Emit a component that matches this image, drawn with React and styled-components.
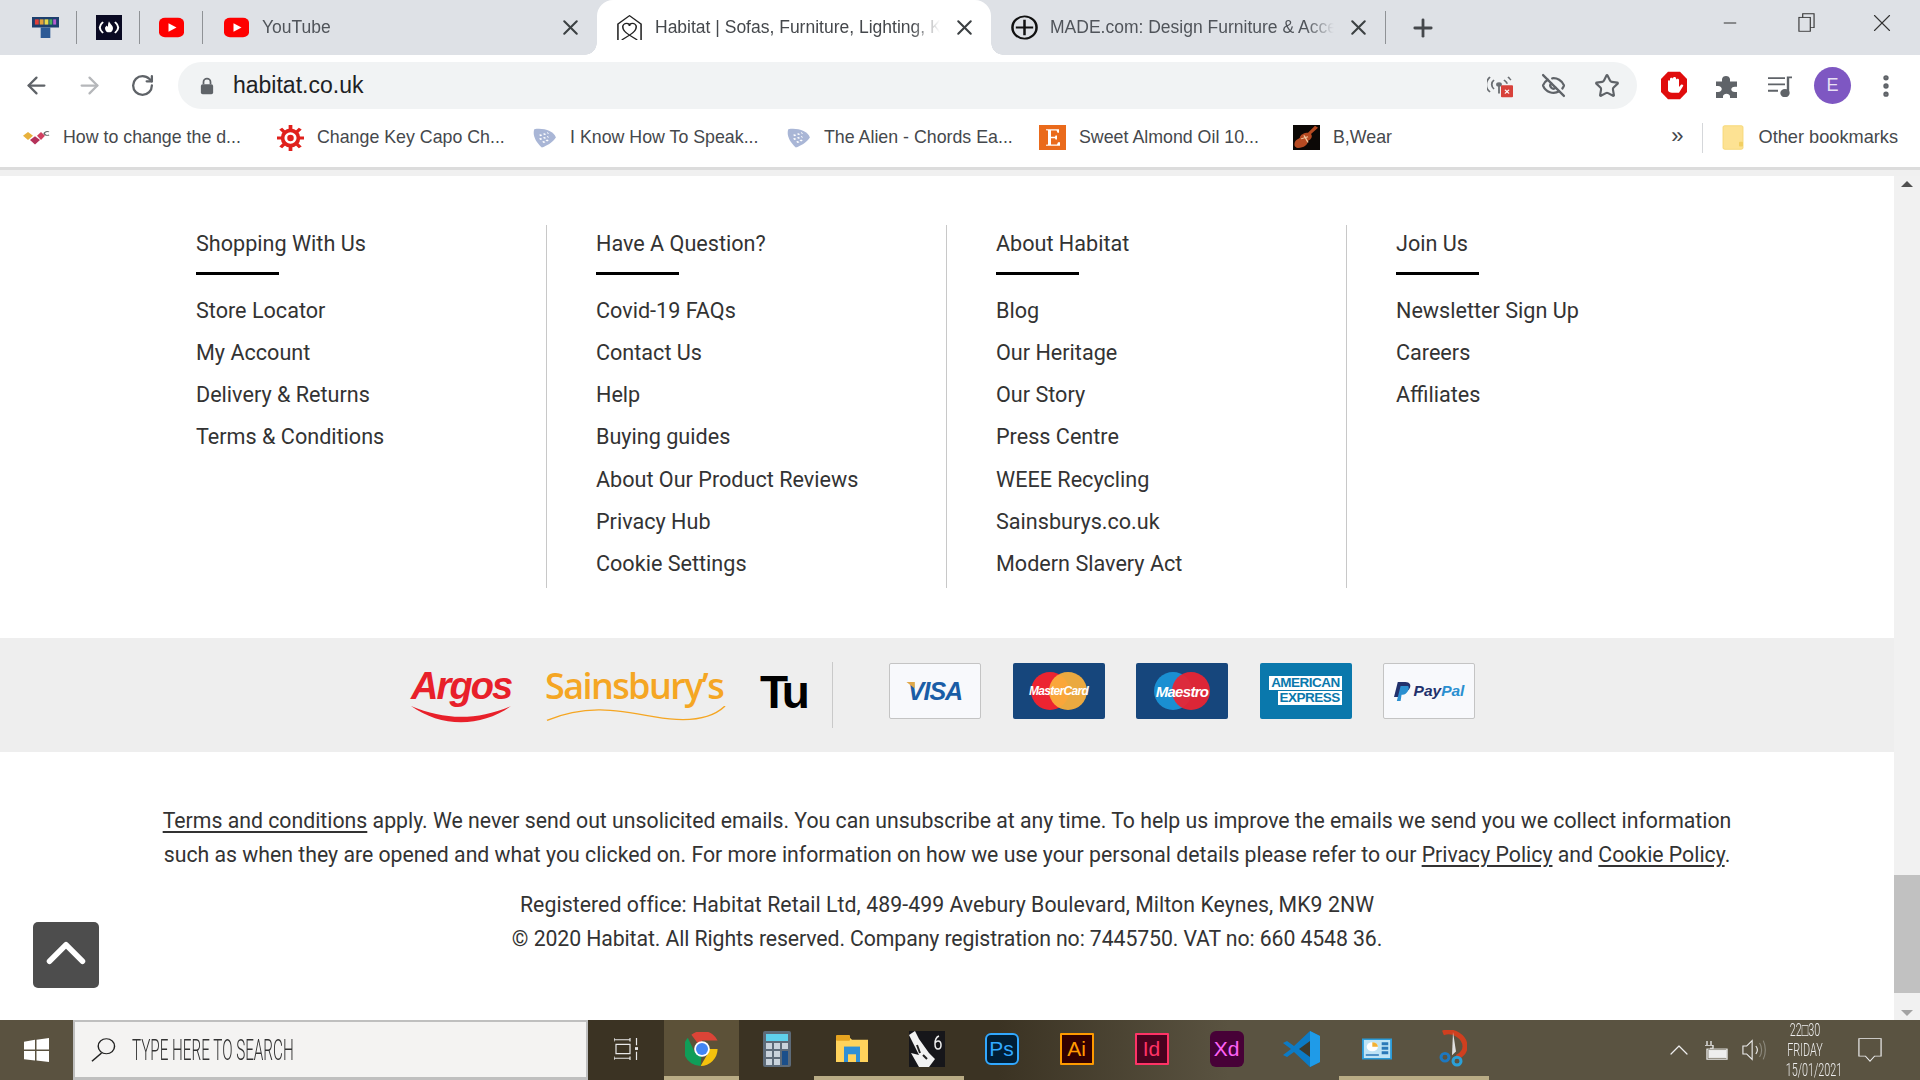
import React from 'react';
import styled, { createGlobalStyle } from 'styled-components';
import { ArrowLeft, ArrowRight, RotateCw, Star, EyeOff, Minus, X, Plus, ChevronUp, MoreVertical } from 'lucide-react';

const Global = createGlobalStyle`
  html, body { margin: 0; padding: 0; background: #fff; overflow: hidden; }
  * { box-sizing: border-box; }
`;

const Shell = styled.div`
  width: 1920px;
  height: 1080px;
  display: flex;
  flex-direction: column;
  position: relative;
  overflow: hidden;
  font-family: "Liberation Sans", Arial, sans-serif;
`;

/* ---------- tab strip ---------- */
const TabStrip = styled.div`
  height: 55px;
  flex: none;
  background: #dee1e6;
  display: flex;
  align-items: stretch;
  padding-left: 14px;
  color: #3c4043;
`;

const Pinned = styled.div`
  width: 63px;
  flex: none;
  display: flex;
  align-items: center;
  justify-content: center;
  position: relative;
  &::after {
    content: '';
    position: absolute;
    right: 0;
    top: 11px;
    bottom: 11px;
    width: 1px;
    background: #8f9296;
  }
`;

const Tab = styled.div`
  width: 394px;
  flex: none;
  display: flex;
  align-items: center;
  gap: 12px;
  padding: 0 14px 0 ${({ $active }) => ($active ? 19 : 20)}px;
  position: relative;
  background: ${({ $active }) => ($active ? '#fff' : 'transparent')};
  border-radius: ${({ $active }) => ($active ? '16px 16px 0 0' : '0')};
  ${({ $active }) =>
    $active &&
    `
    &::before, &::after {
      content: '';
      position: absolute;
      bottom: 0;
      width: 12px;
      height: 12px;
    }
    &::before {
      left: -12px;
      background: radial-gradient(circle at 0 0, transparent 11.5px, #fff 12px);
    }
    &::after {
      right: -12px;
      background: radial-gradient(circle at 100% 0, transparent 11.5px, #fff 12px);
    }
  `}
`;

const TabTitle = styled.span`
  flex: 1;
  min-width: 0;
  white-space: nowrap;
  font-size: 17.5px;
  color: ${({ $active }) => ($active ? '#45484c' : '#50545a')};
  -webkit-mask-image: linear-gradient(to right, #000 90%, transparent 100%);
  mask-image: linear-gradient(to right, #000 90%, transparent 100%);
`;

const TabRule = styled.div`
  width: 1px;
  margin: 11px 0;
  background: #8f9296;
`;

const NewTab = styled.div`
  width: 74px;
  display: flex;
  align-items: center;
  justify-content: center;
  color: #45484c;
`;

const WindowControls = styled.div`
  margin-left: auto;
  display: flex;
`;

const WindowButton = styled.div`
  width: 76px;
  display: flex;
  align-items: center;
  justify-content: center;
  padding-bottom: 10px;
  color: #333;
`;

/* ---------- toolbar ---------- */
const Toolbar = styled.div`
  height: 55px;
  flex: none;
  background: #fff;
  display: flex;
  align-items: center;
  padding: 6px 0 0 10px;
`;

const NavButton = styled.div`
  width: 53px;
  flex: none;
  display: flex;
  justify-content: center;
  color: ${({ $off }) => ($off ? '#b5b7ba' : '#5f6368')};
`;

const Omnibox = styled.div`
  width: 1459px;
  height: 47px;
  margin-left: 9px;
  flex: none;
  background: #f1f3f4;
  border-radius: 24px;
  display: flex;
  align-items: center;
  padding: 0 4px 0 22px;
  color: #5f6368;
`;

const Url = styled.span`
  margin-left: 19px;
  font-size: 23px;
  color: #202124;
  flex: 1;
`;

const OmniIcon = styled.div`
  width: 53px;
  flex: none;
  display: flex;
  justify-content: center;
  color: #5f6368;
`;

const ToolIcons = styled.div`
  display: flex;
  align-items: center;
  padding-left: 10px;
`;

const ToolIcon = styled.div`
  width: 53px;
  flex: none;
  display: flex;
  justify-content: center;
  color: #5f6368;
`;

const Avatar = styled.div`
  width: 37px;
  height: 37px;
  border-radius: 50%;
  background: #7e57c2;
  color: #e8e0f5;
  font-size: 18px;
  display: flex;
  align-items: center;
  justify-content: center;
`;

/* ---------- bookmarks ---------- */
const BookmarkBar = styled.div`
  height: 57px;
  flex: none;
  background: #fff;
  display: flex;
  align-items: center;
  padding-left: 23px;
  padding-bottom: 2px;
`;

const Bookmark = styled.div`
  width: 254px;
  flex: none;
  display: flex;
  align-items: center;
  gap: 13px;
  font-size: 17.8px;
  color: #45484c;
  white-space: nowrap;
`;

const BookmarkEnd = styled.div`
  margin-left: auto;
  display: flex;
  align-items: center;
  padding-right: 22px;
  font-size: 17.8px;
  color: #45484c;
`;

const OtherLabel = styled.span`
  margin-left: 15px;
  font-size: 18.2px;
`;

const Chevrons = styled.span`
  font-size: 22px;
  margin-right: 18px;
  padding-bottom: 4px;
`;

const BarRule = styled.div`
  width: 1px;
  height: 30px;
  background: #d5d7da;
  margin-right: 19px;
`;

const ChromeEdge = styled.div`
  height: 9px;
  flex: none;
  background: #f0f0f0;
  border-top: 3px solid #dcdcdc;
`;

/* ---------- page ---------- */
const Viewport = styled.div`
  flex: 1;
  min-height: 0;
  display: flex;
`;

const Page = styled.main`
  flex: 1;
  min-width: 0;
  background: #fff;
  font-family: Roboto, "Liberation Sans", sans-serif;
  color: #333;
`;

const Columns = styled.div`
  display: grid;
  grid-template-columns: repeat(4, 400px);
  padding: 49px 0 0 147px;
`;

const Column = styled.div`
  height: 363px;
  padding-left: 49px;
  border-right: ${({ $last }) => ($last ? 'none' : '1px solid #c8c8c8')};
`;

const Heading = styled.h3`
  margin: 0;
  padding-top: 1px;
  font-size: 21.6px;
  font-weight: 400;
  line-height: 36px;
  color: #333;
  &::after {
    content: '';
    display: block;
    width: 83px;
    height: 3px;
    margin-top: 10px;
    background: #000;
  }
`;

const LinkList = styled.ul`
  list-style: none;
  margin: 14.5px 0 0;
  padding: 0;
`;

const LinkItem = styled.li`
  font-size: 21.6px;
  line-height: 42.3px;
  white-space: nowrap;
`;

const LogoBand = styled.div`
  margin-top: 50px;
  height: 114px;
  background: #eee;
  display: flex;
  align-items: center;
  padding-left: 411px;
`;

const LogoStack = styled.div`
  width: ${({ $w }) => $w}px;
  flex: none;
  height: 58px;
  display: flex;
  flex-direction: column;
`;

const ArgosWord = styled.span`
  font-weight: 700;
  font-family: "Liberation Sans", sans-serif;
  font-style: italic;
  font-size: 38px;
  line-height: 40px;
  letter-spacing: -1.9px;
  color: #e8202a;
`;

const SainsburyWord = styled.span`
  font-family: "Open Sans", sans-serif;
  font-weight: 600;
  font-size: 36px;
  line-height: 40px;
  letter-spacing: -1.6px;
  color: #f5a623;
  white-space: nowrap;
`;

const Swoosh = styled.svg`
  display: block;
  width: 100%;
  height: 20px;
`;

const TuWord = styled.span`
  width: 46px;
  margin-left: 32px;
  flex: none;
  font-family: "Liberation Sans", sans-serif;
  font-weight: 700;
  font-size: 46px;
  line-height: 50px;
  letter-spacing: -3px;
  color: #000;
  padding-bottom: 6px;
`;

const BandRule = styled.div`
  width: 1px;
  height: 66px;
  margin: 0 56px 0 26px;
  background: #c9c9c9;
  flex: none;
`;

const Cards = styled.div`
  display: flex;
  gap: 31.5px;
  margin-bottom: 8px;
`;

const Card = styled.div`
  width: 92px;
  height: 56px;
  flex: none;
  border-radius: 2px;
  background: ${({ $bg }) => $bg};
  border: ${({ $outlined }) => ($outlined ? '1px solid #c4c4c4' : 'none')};
  display: flex;
  align-items: center;
  justify-content: center;
  font-family: "Liberation Sans", sans-serif;
`;

const VisaMark = styled.span`
  position: relative;
  font-size: 25px;
  font-weight: 700;
  font-style: italic;
  letter-spacing: -1px;
  color: #1a5da6;
  &::before {
    content: '';
    position: absolute;
    left: -2px;
    top: 5px;
    width: 9px;
    height: 7px;
    background: #e0a84a;
    clip-path: polygon(0 0, 100% 0, 100% 100%);
  }
`;

const Circles = styled.div`
  position: relative;
  width: 56px;
  height: 38px;
  display: flex;
  align-items: center;
  justify-content: center;
`;

const Circle = styled.div`
  position: absolute;
  top: 0;
  width: 38px;
  height: 38px;
  border-radius: 50%;
  background: ${({ $c }) => $c};
  ${({ $right }) => ($right ? 'right: 0; opacity: .93;' : 'left: 0;')}
`;

const CardLabel = styled.span`
  position: relative;
  color: #fff;
  font-weight: 700;
  font-style: italic;
  font-size: ${({ $size }) => $size}px;
  letter-spacing: -.7px;
  white-space: nowrap;
`;

const AmexMark = styled.div`
  display: flex;
  flex-direction: column;
  align-items: flex-end;
  font-size: 13.5px;
  line-height: 14px;
  font-weight: 700;
  letter-spacing: -.5px;
`;

const AmexLine = styled.span`
  background: #fff;
  color: #0a78ac;
  padding: 0 2px;
  margin-bottom: 1px;
`;

const PayPalMark = styled.span`
  font-size: 15.5px;
  font-weight: 700;
  font-style: italic;
  color: #22316c;
  margin-left: 3px;
`;

const PayPalTail = styled.span`
  color: #2a8fd0;
`;

const Legal = styled.div`
  padding-top: 52px;
  text-align: center;
  font-size: 21.25px;
  line-height: 34px;
  white-space: nowrap;
`;

const LegalBlock = styled.p`
  margin: 0 0 16px;
`;

const LegalSpaced = styled.span`
  letter-spacing: ${({ $by }) => $by}px;
`;

const LegalLink = styled.span`
  text-decoration: underline;
  text-underline-offset: 3px;
`;

const BackToTop = styled.div`
  position: absolute;
  left: 33px;
  top: 922px;
  width: 66px;
  height: 66px;
  border-radius: 5px;
  background: #4d4d4d;
  color: #fff;
  display: flex;
  align-items: center;
  justify-content: center;
  padding-bottom: 5px;
`;

/* ---------- scrollbar ---------- */
const Scrollbar = styled.div`
  width: 26px;
  flex: none;
  background: #f1f1f1;
  display: flex;
  flex-direction: column;
  align-items: center;
`;

const ScrollArrow = styled.div`
  height: 15px;
  width: 100%;
  display: flex;
  justify-content: center;
  align-items: center;
  margin-top: ${({ $top }) => ($top ? 0 : 'auto')};
  &::before {
    content: '';
    border-left: 6px solid transparent;
    border-right: 6px solid transparent;
    ${({ $top }) =>
      $top ? 'border-bottom: 6px solid #505050;' : 'border-top: 6px solid #a3a3a3;'}
  }
`;

const ScrollTrack = styled.div`
  height: 118px;
  width: 100%;
  margin-top: 684px;
  background: #c1c1c1;
`;

/* ---------- taskbar ---------- */
const Taskbar = styled.div`
  height: 60px;
  flex: none;
  display: flex;
  align-items: stretch;
  background: linear-gradient(to right, #3b3323 0%, #3b3323 52%, #5a5341 64%, #5a5341 100%);
`;

const StartButton = styled.div`
  width: 73px;
  flex: none;
  background: #5a5240;
  display: flex;
  align-items: center;
  justify-content: center;
`;

const SearchBox = styled.div`
  width: 515px;
  flex: none;
  background: #f4f3f2;
  border: 2px solid #bfbfbf;
  border-bottom-width: 3px;
  display: flex;
  align-items: center;
  padding-left: 16px;
  overflow: hidden;
`;

const SearchText = styled.span`
  margin-left: 16px;
  font-family: Roboto, sans-serif;
  font-weight: 300;
  font-size: 29px;
  transform: scaleX(0.525);
  transform-origin: left center;
  white-space: nowrap;
  color: #333;
`;

const TaskSlot = styled.div`
  width: ${({ $w }) => $w || 75}px;
  flex: none;
  display: flex;
  align-items: center;
  justify-content: center;
  padding-top: 1px;
  background: ${({ $active }) => ($active ? '#5c5138' : 'transparent')};
  border-bottom: 4px solid ${({ $open }) => ($open ? '#b9ac85' : 'transparent')};
`;

const AppTile = styled.div`
  width: 34px;
  height: ${({ $tall }) => ($tall ? 36 : 32)}px;
  border-radius: ${({ $round }) => ($round ? 6 : 1)}px;
  background: ${({ $bg }) => $bg};
  border: ${({ $bd }) => ($bd ? `2.5px solid ${$bd}` : 'none')};
  color: ${({ $fg }) => $fg};
  display: flex;
  align-items: center;
  justify-content: center;
  font-size: 21px;
  font-family: "Liberation Sans", sans-serif;
`;

const Tray = styled.div`
  margin-left: auto;
  display: flex;
  align-items: center;
  color: #eee;
`;

const TrayIcon = styled.div`
  width: ${({ $w }) => $w}px;
  flex: none;
  display: flex;
  justify-content: center;
`;

const Clock = styled.div`
  width: 64px;
  flex: none;
  text-align: center;
  font-family: Roboto, sans-serif;
  font-weight: 300;
  font-size: 18px;
  line-height: 20px;
  color: #eee;
`;

const ClockLine = styled.div`
  transform: scaleX(0.6);
  white-space: nowrap;
`;

/* ---------- drawings ---------- */
const YouTubeIcon = () => (
  <svg width="27" height="21" viewBox="0 0 27 27" preserveAspectRatio="none">
    <rect x="1" y="1" width="25" height="25" rx="6" fill="#fe0000" />
    <path d="M10.500 8v11l8-5.500z" fill="#fff" />
  </svg>
);

const TetrisIcon = () => (
  <svg width="27" height="21" viewBox="0 0 28 36" preserveAspectRatio="none">
    <rect x="0" y="0" width="28" height="18" fill="#1c3f6e" />
    <rect x="9" y="18" width="10" height="18" fill="#2c5a96" />
    <rect x="3" y="4" width="4" height="9" fill="#e0403a" />
    <rect x="8" y="4" width="4" height="9" fill="#e3a23a" />
    <rect x="13" y="4" width="4" height="9" fill="#e8d94a" />
    <rect x="18" y="4" width="3" height="9" fill="#48b35b" />
    <rect x="22" y="4" width="3" height="9" fill="#b45bd0" />
  </svg>
);

const FccIcon = () => (
  <svg width="26" height="25" viewBox="0 0 26 36" preserveAspectRatio="none">
    <rect width="26" height="36" fill="#0a0a23" />
    <path d="M7 10c-4 5-4 11 0 16M19 10c4 5 4 11 0 16" stroke="#fff" strokeWidth="2" fill="none" />
    <path d="M13 9c1 4 4 6 4 10s-2 6-4 6-4-2-4-6c0-2 1-3 2-4 0 2 1 2 1 1 0-2 0-4 1-7z" fill="#fff" />
  </svg>
);

const HabitatIcon = () => (
  <svg width="27" height="25" viewBox="0 0 28 36" preserveAspectRatio="none" fill="none" stroke="#222" strokeWidth="1.600">
    <path d="M2 36V13L14 1l12 12v23" />
    <path d="M14 29c-5-4-7-8-7-12 0-3 2-5 4-5s3 2 3 4c0-2 1-4 3-4s4 2 4 5c0 4-2 8-7 12zM6 36l8-7 8 7" />
  </svg>
);

const MadeIcon = () => (
  <svg width="27" height="25" viewBox="0 0 28 36" preserveAspectRatio="none" fill="none" stroke="#111" strokeWidth="2.600">
    <ellipse cx="14" cy="18" rx="12.500" ry="16" />
    <path d="M14 7v22M5 18h18" />
  </svg>
);

const WcIcon = () => (
  <svg width="27" height="15" viewBox="0 0 27 24" preserveAspectRatio="none">
    <path d="M0 9l5-6 5 6-5 7z" fill="#e8b13c" />
    <path d="M7 16l5-6 5 6-5 7z" fill="#b5325a" />
    <path d="M14 9l4-6 4 6-4 7z" fill="#d04060" />
    <path d="M26 3a3 3 0 1 0 0 5" stroke="#666" fill="none" strokeWidth="1.500" />
  </svg>
);

const GearIcon = () => (
  <svg width="27" height="26" viewBox="0 0 29 36" preserveAspectRatio="none">
    <g stroke="#e0201c" strokeWidth="4">
      <path d="M14.500 0v36M0 18h29M4 5l21 26M25 5L4 31" />
    </g>
    <ellipse cx="14.500" cy="18" rx="10.500" ry="13" fill="#e0201c" />
    <ellipse cx="14.500" cy="18" rx="6.500" ry="8" fill="#fff" />
    <ellipse cx="14.500" cy="18" rx="3.500" ry="4.500" fill="#e0201c" />
  </svg>
);

const PickIcon = () => (
  <svg width="26" height="20" viewBox="0 0 24 32" preserveAspectRatio="none">
    <path d="M3 2c8-3 18 3 20 13-3 8-9 14-13 16C5 24 1 12 3 2z" fill="#a9b6d6" />
    <path d="M8 12l8-4M8 18l8-4M11 23l5-4" stroke="#fff" strokeWidth="2.400" strokeDasharray="2 2" />
  </svg>
);

const EtsyIcon = () => (
  <svg width="27" height="25" viewBox="0 0 27 36" preserveAspectRatio="none">
    <rect width="27" height="36" fill="#ea6a1b" />
    <path d="M7 6h13v5h-1.500l-1-3H12v9h4l.5-2H18v6h-1.500l-.5-2h-4v9h6l1-3H21v5H7v-1.500l2-.5V8l-2-.5z" fill="#fff" />
  </svg>
);

const ViolinIcon = () => (
  <svg width="27" height="25" viewBox="0 0 27 36" preserveAspectRatio="none">
    <rect width="27" height="36" fill="#0c0806" />
    <path d="M22 1l3 3-7 9c2 4 0 8-3 10 0 5-4 10-10 10-4-1-4-5-3-9 1-3 4-4 5-6 0-4 4-7 8-7z" fill="#b64a22" />
    <path d="M11 15l4 10M8 20l7-3" stroke="#f1c8a0" strokeWidth="1.500" />
  </svg>
);

const FolderIcon = () => (
  <svg width="22" height="25" viewBox="0 0 22 36" preserveAspectRatio="none">
    <rect x="1" y="1" width="20" height="34" rx="2" fill="#fde293" stroke="#f6d774" />
    <rect x="17" y="24" width="4" height="7" rx="1" fill="#f2cf62" />
  </svg>
);

const LockIcon = () => (
  <svg width="14" height="18" viewBox="0 0 16 22" preserveAspectRatio="none" fill="#5f6368">
    <rect x="1" y="9" width="14" height="12" rx="2" />
    <path d="M4 9V6a4 4 0 0 1 8 0v3" fill="none" stroke="#5f6368" strokeWidth="2" />
  </svg>
);

const CastBlocked = () => (
  <svg width="28" height="24" viewBox="0 0 28 32" preserveAspectRatio="none" fill="none" stroke="#6a6e72" strokeWidth="1.800">
    <circle cx="12" cy="14" r="2" fill="#6a6e72" />
    <path d="M12 16v10M7 8c-3 3-3 9 0 12M17 8c2 2 3 4 3 5M3 4c-5 6-5 15 0 20M21 4c1 1 2 3 3 4" />
    <rect x="14" y="15" width="12" height="16" rx="1" fill="#d8413a" stroke="none" />
    <path d="M18 21l4 5M22 21l-4 5" stroke="#fff" strokeWidth="1.500" />
  </svg>
);

const StopHand = () => (
  <svg width="28" height="29" viewBox="0 0 28 36" preserveAspectRatio="none">
    <path d="M8 1h12l7 9v16l-7 9H8l-7-9V10z" fill="#e00c0c" />
    <path d="M8 24V13c0-2 2-2 2 0v-3c0-2 3-2 3 0V9c0-2 3-2 3 0v2c0-2 3-2 3 0v9l2-3c1-1 3 0 2 2l-4 8h-7c-2 0-4-1-4-3z" fill="#fff" />
  </svg>
);

const PuzzleIcon = () => (
  <svg width="25" height="24" viewBox="0 0 25 32" preserveAspectRatio="none" fill="#5f6368">
    <path d="M2 10h6V7c0-6 8-6 8 0v3h7v7h-2c-5 0-5 7 0 7h2v8h-7v-2c0-5-7-5-7 0v2H2v-8h2c5 0 5-8 0-8H2z" />
  </svg>
);

const QueueIcon = () => (
  <svg width="26" height="22" viewBox="0 0 26 28" preserveAspectRatio="none" fill="none" stroke="#5f6368" strokeWidth="2.400">
    <path d="M1 4h17M1 12h17M1 20h10" />
    <path d="M21 22V3h4" />
    <ellipse cx="18" cy="23" rx="3.500" ry="4" fill="#5f6368" />
  </svg>
);

const RestoreIcon = () => (
  <svg width="17" height="19" viewBox="0 0 18 26" preserveAspectRatio="none" fill="none" stroke="#333" strokeWidth="1.200">
    <rect x="1" y="6" width="12" height="19" />
    <path d="M5 6V1h12v19h-4" />
  </svg>
);

const WindowsLogo = () => (
  <svg width="25" height="24" viewBox="0 0 25 26" preserveAspectRatio="none" fill="#fff">
    <path d="M0 4l11-2v10.500H0zM12.500 1.800L25 0v12.500H12.500zM0 14h11v10.500L0 23zM12.500 14H25v12l-12.500-1.500z" />
  </svg>
);

const SearchGlass = () => (
  <svg width="25" height="24" viewBox="0 0 26 32" preserveAspectRatio="none" fill="none" stroke="#222" strokeWidth="1.500">
    <ellipse cx="16" cy="11" rx="8.500" ry="10" />
    <path d="M11 20L1 31" />
  </svg>
);

const TaskViewIcon = () => (
  <svg width="25" height="24" viewBox="0 0 25 26" preserveAspectRatio="none" fill="none" stroke="#e8e8e8" strokeWidth="1.200">
    <path d="M0 3h16M16 1v4M0 1v4M2 8h14v10H2zM0 23h16M0 25v-4M16 25v-4" />
    <rect x="21" y="11" width="3" height="3" fill="#e8e8e8" stroke="none" />
    <path d="M22.500 1v8M22.500 16v9" />
  </svg>
);

const ChromeIcon = () => (
  <svg width="34" height="34" viewBox="0 0 48 48">
    <path d="M24 24L9 4a24 24 0 0 1 37 8H24z" fill="#db4437" />
    <path d="M24 24H46a24 24 0 0 1-24 24l11-19z" fill="#f4c20d" />
    <path d="M24 24L22 48A24 24 0 0 1 4 8l10 21z" fill="#0f9d58" />
    <circle cx="24" cy="24" r="11" fill="#fff" />
    <circle cx="24" cy="24" r="8.500" fill="#4285f4" />
  </svg>
);

const CalculatorIcon = () => (
  <svg width="28" height="36" viewBox="0 0 28 36">
    <rect width="28" height="36" rx="2" fill="#5d6b79" />
    <rect x="3" y="3" width="22" height="7" fill="#5fd0ec" />
    <g fill="#c9d3dc">
      <rect x="3" y="12" width="6" height="6" />
      <rect x="11" y="12" width="6" height="6" />
      <rect x="19" y="12" width="6" height="6" />
      <rect x="3" y="20" width="6" height="6" />
      <rect x="11" y="20" width="6" height="6" />
      <rect x="3" y="28" width="6" height="6" />
      <rect x="11" y="28" width="6" height="6" />
    </g>
    <rect x="19" y="20" width="6" height="14" fill="#1b4f8a" />
  </svg>
);

const ExplorerIcon = () => (
  <svg width="32" height="27" viewBox="0 0 32 28" preserveAspectRatio="none">
    <path d="M0 2h13l3 3h16v23H0z" fill="#ffd35c" />
    <rect x="0" y="0" width="14" height="6" rx="1" fill="#e6a420" />
    <rect x="8" y="12" width="16" height="16" fill="#2f8fd6" />
    <rect x="12" y="20" width="8" height="8" fill="#ffd35c" />
  </svg>
);

const RhinoIcon = () => (
  <svg width="36" height="36" viewBox="0 0 36 36">
    <rect width="36" height="36" fill="#16161a" />
    <path d="M0 4l6-4 4 8 10 14 6 6-6 8H10L2 22l8 2z" fill="#f2f2f2" />
    <path d="M8 14l3 8M14 24l4 4" stroke="#222" strokeWidth="2" />
    <path d="M30 5c-3 1-4 4-4 8s1 5 3 5 3-2 3-4-1-4-3-4-2 1-3 2" fill="none" stroke="#eee" strokeWidth="1.500" />
  </svg>
);

const VsCodeIcon = () => (
  <svg width="37" height="36" viewBox="0 0 37 36">
    <path d="M27 0l10 5v26l-10 5L11 21l-7 5-4-2 8-6-8-6 4-2 7 5z" fill="#0c7bc6" />
    <path d="M27 10L16 18l11 8z" fill="#3d3a2d" />
    <path d="M27 0l10 5v26l-10 5z" fill="#1f9be8" />
  </svg>
);

const ControlPanelIcon = () => (
  <svg width="30" height="24" viewBox="0 0 32 32" preserveAspectRatio="none">
    <rect y="2" width="32" height="28" fill="#2b9bd8" />
    <rect x="2" y="4" width="28" height="24" fill="#bfe4f5" />
    <circle cx="11" cy="13" r="6" fill="#fff" />
    <path d="M11 13V7a6 6 0 0 1 6 6z" fill="#f2b134" />
    <path d="M21 7h7v4h-7zM21 13h7v4h-7zM21 19h7v4h-7z" fill="#2b79b8" />
    <path d="M4 24h14" stroke="#2b79b8" strokeWidth="2" />
  </svg>
);

const SnipIcon = () => (
  <svg width="30" height="37" viewBox="0 0 30 38" preserveAspectRatio="none" fill="none">
    <path d="M6 3c10-4 22 4 22 14 0 5-4 9-8 11" stroke="#cf3f1f" strokeWidth="5" />
    <path d="M16 2l3 20-4 4z" fill="#e0e0e0" />
    <circle cx="8" cy="28" r="4" stroke="#1d78c1" strokeWidth="3" />
    <circle cx="20" cy="32" r="4" stroke="#2aa0d8" strokeWidth="3" />
  </svg>
);

const BatteryIcon = () => (
  <svg width="25" height="19" viewBox="0 0 25 26" preserveAspectRatio="none" fill="none" stroke="#eee" strokeWidth="1.300">
    <path d="M3 0v6M7 0v6M1 6h8v4H6" />
    <rect x="3" y="11" width="20" height="14" />
    <rect x="5" y="13" width="17" height="10" fill="#eee" />
  </svg>
);

const VolumeIcon = () => (
  <svg width="24" height="22" viewBox="0 0 26 28" preserveAspectRatio="none" fill="none" stroke="#eee" strokeWidth="1.200">
    <path d="M1 9h4l6-7v24l-6-7H1z" />
    <path d="M15 9c2 3 2 7 0 10" />
    <path d="M19 5c3 5 3 13 0 18M23 2c3 7 3 17 0 24" stroke="#8d8a7e" />
  </svg>
);

const NotifyIcon = () => (
  <svg width="24" height="25" viewBox="0 0 26 44" preserveAspectRatio="none" fill="none" stroke="#eee" strokeWidth="1.300">
    <path d="M1 1h24v31h-7l-5 9-5-9H1z" />
  </svg>
);

/* ---------- data ---------- */
const columns = [
  { title: 'Shopping With Us', links: ['Store Locator', 'My Account', 'Delivery & Returns', 'Terms & Conditions'] },
  { title: 'Have A Question?', links: ['Covid-19 FAQs', 'Contact Us', 'Help', 'Buying guides', 'About Our Product Reviews', 'Privacy Hub', 'Cookie Settings'] },
  { title: 'About Habitat', links: ['Blog', 'Our Heritage', 'Our Story', 'Press Centre', 'WEEE Recycling', 'Sainsburys.co.uk', 'Modern Slavery Act'] },
  { title: 'Join Us', links: ['Newsletter Sign Up', 'Careers', 'Affiliates'] },
];

const bookmarks = [
  { icon: <WcIcon />, label: 'How to change the d...' },
  { icon: <GearIcon />, label: 'Change Key Capo Ch...' },
  { icon: <PickIcon />, label: 'I Know How To Speak...' },
  { icon: <PickIcon />, label: 'The Alien - Chords Ea...' },
  { icon: <EtsyIcon />, label: 'Sweet Almond Oil 10...' },
  { icon: <ViolinIcon />, label: 'B,Wear' },
];

export default function App() {
  return (
    <Shell>
      <Global />
      <TabStrip>
        <Pinned><TetrisIcon /></Pinned>
        <Pinned><FccIcon /></Pinned>
        <Pinned><YouTubeIcon /></Pinned>
        <Tab>
          <YouTubeIcon />
          <TabTitle>YouTube</TabTitle>
          <X size={25} strokeWidth={2} />
        </Tab>
        <Tab $active>
          <HabitatIcon />
          <TabTitle $active>Habitat | Sofas, Furniture, Lighting, K</TabTitle>
          <X size={25} strokeWidth={2} />
        </Tab>
        <Tab>
          <MadeIcon />
          <TabTitle>MADE.com: Design Furniture &amp; Acce</TabTitle>
          <X size={25} strokeWidth={2} />
        </Tab>
        <TabRule />
        <NewTab><Plus size={28} strokeWidth={2.4} /></NewTab>
        <WindowControls>
          <WindowButton><Minus size={20} strokeWidth={1.2} /></WindowButton>
          <WindowButton><RestoreIcon /></WindowButton>
          <WindowButton><X size={30} strokeWidth={0.9} /></WindowButton>
        </WindowControls>
      </TabStrip>

      <Toolbar>
        <NavButton><ArrowLeft size={27} strokeWidth={2} /></NavButton>
        <NavButton $off><ArrowRight size={27} strokeWidth={2} /></NavButton>
        <NavButton><RotateCw size={25} strokeWidth={2.2} /></NavButton>
        <Omnibox>
          <LockIcon />
          <Url>habitat.co.uk</Url>
          <OmniIcon><CastBlocked /></OmniIcon>
          <OmniIcon><EyeOff size={25} strokeWidth={2.2} /></OmniIcon>
          <OmniIcon><Star size={26} strokeWidth={2} /></OmniIcon>
        </Omnibox>
        <ToolIcons>
          <ToolIcon><StopHand /></ToolIcon>
          <ToolIcon><PuzzleIcon /></ToolIcon>
          <ToolIcon><QueueIcon /></ToolIcon>
          <ToolIcon><Avatar>E</Avatar></ToolIcon>
          <ToolIcon><MoreVertical size={28} strokeWidth={2.6} /></ToolIcon>
        </ToolIcons>
      </Toolbar>

      <BookmarkBar>
        {bookmarks.map((b) => (
          <Bookmark key={b.label}>
            {b.icon}
            {b.label}
          </Bookmark>
        ))}
        <BookmarkEnd>
          <Chevrons>»</Chevrons>
          <BarRule />
          <FolderIcon />
          <OtherLabel>Other bookmarks</OtherLabel>
        </BookmarkEnd>
      </BookmarkBar>
      <ChromeEdge />

      <Viewport>
        <Page>
          <Columns>
            {columns.map((col, i) => (
              <Column key={col.title} $last={i === columns.length - 1}>
                <Heading>{col.title}</Heading>
                <LinkList>
                  {col.links.map((l) => (
                    <LinkItem key={l}>{l}</LinkItem>
                  ))}
                </LinkList>
              </Column>
            ))}
          </Columns>

          <LogoBand>
            <LogoStack $w={134}>
              <ArgosWord>Argos</ArgosWord>
              <Swoosh viewBox="0 0 134 20" preserveAspectRatio="none">
                <path d="M0 0c34 16 66 16 100 0-30 24-70 24-100 0z" fill="#e8202a" />
              </Swoosh>
            </LogoStack>
            <LogoStack $w={183}>
              <SainsburyWord>Sainsbury’s</SainsburyWord>
              <Swoosh viewBox="0 0 183 20" preserveAspectRatio="none">
                <path d="M2 16C40 -2 70 4 110 12c30 6 55 4 70-12" fill="none" stroke="#f5a623" strokeWidth="1.500" />
              </Swoosh>
            </LogoStack>
            <TuWord>Tu</TuWord>
            <BandRule />
            <Cards>
              <Card $bg="#f8f9fc" $outlined><VisaMark>VISA</VisaMark></Card>
              <Card $bg="#16467c">
                <Circles>
                  <Circle $c="#ec2431" />
                  <Circle $c="#fbb03b" $right />
                  <CardLabel $size={12}>MasterCard</CardLabel>
                </Circles>
              </Card>
              <Card $bg="#16467c">
                <Circles>
                  <Circle $c="#1a8fd2" />
                  <Circle $c="#ec2431" $right />
                  <CardLabel $size={15}>Maestro</CardLabel>
                </Circles>
              </Card>
              <Card $bg="#0a78ac">
                <AmexMark>
                  <AmexLine>AMERICAN</AmexLine>
                  <AmexLine>EXPRESS</AmexLine>
                </AmexMark>
              </Card>
              <Card $bg="#f8f9fc" $outlined>
                <svg width="17" height="19" viewBox="0 0 18 24" preserveAspectRatio="none">
                  <path d="M4 0h8c5 0 6 4 5 7-1 4-4 6-8 6H7l-1 6H0z" fill="#22316c" />
                  <path d="M7 5h8c2 3-1 11-6 11H8l-1 8H3z" fill="#2a8fd0" />
                </svg>
                <PayPalMark>Pay<PayPalTail>Pal</PayPalTail></PayPalMark>
              </Card>
            </Cards>
          </LogoBand>

          <Legal>
            <LegalBlock>
              <LegalLink>Terms and conditions</LegalLink> apply. We never send out unsolicited emails. You can unsubscribe at any time. To help us improve the emails we send you we collect information
              <br />
              such as when they are opened and what you clicked on. For more information on how we use your personal details please refer to our <LegalLink>Privacy Policy</LegalLink> and <LegalLink>Cookie Policy</LegalLink>.
            </LegalBlock>
            <LegalBlock>
              <LegalSpaced $by={0.06}>Registered office: Habitat Retail Ltd, 489-499 Avebury Boulevard, Milton Keynes, MK9 2NW</LegalSpaced>
              <br />
              <LegalSpaced $by={-0.1}>© 2020 Habitat. All Rights reserved. Company registration no: 7445750. VAT no: 660 4548 36.</LegalSpaced>
            </LegalBlock>
          </Legal>
        </Page>
        <Scrollbar>
          <ScrollArrow $top />
          <ScrollTrack />
          <ScrollArrow />
        </Scrollbar>
      </Viewport>

      <BackToTop><ChevronUp size={70} strokeWidth={2} /></BackToTop>

      <Taskbar>
        <StartButton><WindowsLogo /></StartButton>
        <SearchBox>
          <SearchGlass />
          <SearchText>TYPE HERE TO SEARCH</SearchText>
        </SearchBox>
        <TaskSlot $w={76}><TaskViewIcon /></TaskSlot>
        <TaskSlot $active $open><ChromeIcon /></TaskSlot>
        <TaskSlot><CalculatorIcon /></TaskSlot>
        <TaskSlot $open><ExplorerIcon /></TaskSlot>
        <TaskSlot $open><RhinoIcon /></TaskSlot>
        <TaskSlot><AppTile $round $bg="#001e36" $bd="#31a8ff" $fg="#31a8ff">Ps</AppTile></TaskSlot>
        <TaskSlot><AppTile $bg="#330000" $bd="#ff9a00" $fg="#ff9a00">Ai</AppTile></TaskSlot>
        <TaskSlot><AppTile $bg="#49021f" $bd="#ff3366" $fg="#ff3366">Id</AppTile></TaskSlot>
        <TaskSlot><AppTile $round $tall $bg="#470137" $fg="#ff61f6">Xd</AppTile></TaskSlot>
        <TaskSlot><VsCodeIcon /></TaskSlot>
        <TaskSlot $open><ControlPanelIcon /></TaskSlot>
        <TaskSlot $open><SnipIcon /></TaskSlot>
        <Tray>
          <TrayIcon $w={36}><ChevronUp size={32} strokeWidth={0.9} /></TrayIcon>
          <TrayIcon $w={38}><BatteryIcon /></TrayIcon>
          <TrayIcon $w={38}><VolumeIcon /></TrayIcon>
          <Clock>
            <ClockLine>22□30</ClockLine>
            <ClockLine>FRIDAY</ClockLine>
            <ClockLine>15/01/2021</ClockLine>
          </Clock>
          <TrayIcon $w={66}><NotifyIcon /></TrayIcon>
          <TrayIcon $w={17} />
        </Tray>
      </Taskbar>
    </Shell>
  );
}
